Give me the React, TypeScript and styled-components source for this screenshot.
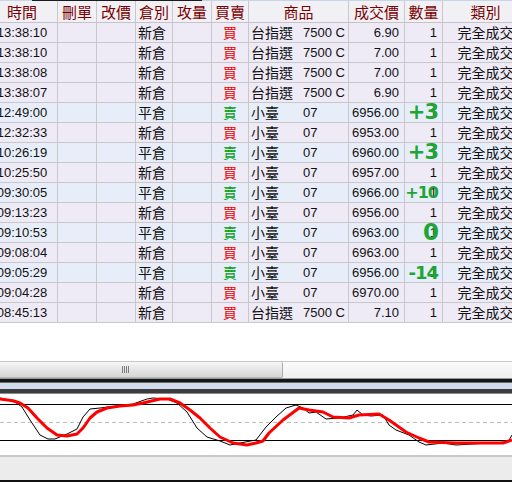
import React from 'react'
import styled, { createGlobalStyle } from 'styled-components'

const GlobalStyle = createGlobalStyle`
  html, body {
    margin: 0;
    padding: 0;
    background: #ffffff;
    overflow: hidden;
  }
  * {
    box-sizing: border-box;
  }
`

const COLS = '71px 39px 39px 37px 39px 37px 100px 56px 38px 86px'
const HEADERS = ['時間', '刪單', '改價', '倉別', '攻量', '買賣', '商品', '成交價', '數量', '類別']

type Trade = {
  time: string
  kind: string
  side: '買' | '賣'
  name: string
  code: string
  price: string
  qty: string
  pnl?: { text: string; size: number }
}

const trades: Trade[] = [
  { time: '13:38:10', kind: '新倉', side: '買', name: '台指選', code: '7500 C', price: '6.90', qty: '1' },
  { time: '13:38:10', kind: '新倉', side: '買', name: '台指選', code: '7500 C', price: '7.00', qty: '1' },
  { time: '13:38:08', kind: '新倉', side: '買', name: '台指選', code: '7500 C', price: '7.00', qty: '1' },
  { time: '13:38:07', kind: '新倉', side: '買', name: '台指選', code: '7500 C', price: '6.90', qty: '1' },
  { time: '12:49:00', kind: '平倉', side: '賣', name: '小臺', code: '07', price: '6956.00', qty: '1', pnl: { text: '+3', size: 21 } },
  { time: '12:32:33', kind: '新倉', side: '買', name: '小臺', code: '07', price: '6953.00', qty: '1' },
  { time: '10:26:19', kind: '平倉', side: '賣', name: '小臺', code: '07', price: '6960.00', qty: '1', pnl: { text: '+3', size: 21 } },
  { time: '10:25:50', kind: '新倉', side: '買', name: '小臺', code: '07', price: '6957.00', qty: '1' },
  { time: '09:30:05', kind: '平倉', side: '賣', name: '小臺', code: '07', price: '6966.00', qty: '1', pnl: { text: '+10', size: 16 } },
  { time: '09:13:23', kind: '新倉', side: '買', name: '小臺', code: '07', price: '6956.00', qty: '1' },
  { time: '09:10:53', kind: '平倉', side: '賣', name: '小臺', code: '07', price: '6963.00', qty: '1', pnl: { text: '0', size: 23 } },
  { time: '09:08:04', kind: '新倉', side: '買', name: '小臺', code: '07', price: '6963.00', qty: '1' },
  { time: '09:05:29', kind: '平倉', side: '賣', name: '小臺', code: '07', price: '6956.00', qty: '1', pnl: { text: '-14', size: 18 } },
  { time: '09:04:28', kind: '新倉', side: '買', name: '小臺', code: '07', price: '6970.00', qty: '1' },
  { time: '08:45:13', kind: '新倉', side: '買', name: '台指選', code: '7500 C', price: '7.10', qty: '1' },
]

// chart traces, y relative to chart top
const kLine = [
  [0, 4], [15, 8], [22, 13], [30, 26], [40, 41], [48, 45], [55, 45], [67, 40], [77, 35], [83, 23],
  [90, 15], [100, 14], [117, 12], [133, 10], [147, 5], [153, 4], [167, 5], [177, 9], [187, 18],
  [197, 34], [207, 43], [220, 47], [230, 51], [240, 49], [256, 46], [266, 33], [276, 23], [286, 14],
  [296, 11], [303, 14], [309, 19], [316, 18], [326, 25], [339, 24], [353, 21], [357, 16], [363, 21],
  [371, 22], [383, 21], [389, 31], [396, 36], [409, 41], [419, 48], [426, 51], [443, 49], [456, 51],
  [489, 49], [508, 48], [512, 41],
]

const dLine = [
  [0, 5], [13, 6.7], [20, 9], [28, 14], [37, 24], [47, 34], [57, 41], [67, 42], [77, 40], [83, 34],
  [90, 24], [97, 18], [107, 14], [120, 12], [133, 11], [143, 9], [160, 5], [170, 5], [180, 9],
  [190, 16], [200, 24], [210, 34], [220, 43], [233, 49], [247, 51], [256, 49], [263, 47], [269, 39],
  [283, 26], [299, 14], [309, 16], [323, 18], [333, 23], [349, 24], [359, 21], [379, 20], [389, 26],
  [406, 38], [419, 44], [429, 48], [456, 49], [473, 49], [503, 49], [512, 46],
]

const toPoints = (pts: number[][]) => pts.map(([x, y]) => `${x},${y}`).join(' ')

const App: React.FC = () => {
  return (
    <Page>
      <GlobalStyle />
      <TopStrip>
        <StripLight style={{ width: 32 }} />
        <StripDark />
        <StripLight style={{ flex: 1 }} />
      </TopStrip>
      <TableViewport>
        <Table>
          <HeaderRow>
            {HEADERS.map((h) => (
              <HeaderCell key={h}>{h}</HeaderCell>
            ))}
          </HeaderRow>
          {trades.map((t, i) => (
            <Row key={i} $sell={t.side === '賣'}>
              <Cell $align="center">{t.time}</Cell>
              <Cell />
              <Cell />
              <Cell $align="left" $cjk>{t.kind}</Cell>
              <Cell />
              <Cell $align="center" $cjk>
                <Side $sell={t.side === '賣'}>{t.side}</Side>
              </Cell>
              <Cell $align="left">
                <ProductName>{t.name}</ProductName>
                <span>{t.code}</span>
              </Cell>
              <Cell $align="right">{t.price}</Cell>
              <Cell $align="right">
                {t.qty}
                {t.pnl && <PnlBadge $size={t.pnl.size}>{t.pnl.text}</PnlBadge>}
              </Cell>
              <Cell $align="center" $cjk>完全成交</Cell>
            </Row>
          ))}
        </Table>
      </TableViewport>
      <ScrollTrack>
        <ScrollThumb>
          <Grip>
            <i /><i /><i /><i />
          </Grip>
        </ScrollThumb>
      </ScrollTrack>
      <Splitter>
        <SplitLine $h={1} $c="#9a9a9a" />
        <SplitLine $h={3} $c="#161616" />
        <SplitLine $h={1} $c="#6a6a6a" />
        <SplitLine $h={6} $c="#d2dcee" />
        <SplitLine $h={4} $c="#3c3c3c" />
        <SplitLine $h={1} $c="#8c8c8c" />
      </Splitter>
      <ChartPane>
        <svg width="512" height="61" viewBox="0 0 512 61">
          <line x1="0" y1="10.5" x2="512" y2="10.5" stroke="#000" strokeWidth="1.2" />
          <line x1="0" y1="28.5" x2="512" y2="28.5" stroke="#bdbdbd" strokeWidth="1" strokeDasharray="4 3" />
          <line x1="0" y1="46.5" x2="512" y2="46.5" stroke="#000" strokeWidth="1.2" />
          <polyline points={toPoints(kLine)} fill="none" stroke="#000" strokeWidth="1" strokeLinejoin="round" />
          <polyline points={toPoints(dLine)} fill="none" stroke="#ff0000" strokeWidth="3" strokeLinejoin="round" />
        </svg>
      </ChartPane>
      <Footer />
      <BottomEdge />
    </Page>
  )
}

const Page = styled.div`
  width: 512px;
  height: 482px;
  display: flex;
  flex-direction: column;
  background: #ffffff;
  overflow: hidden;
`

const TopStrip = styled.div`
  display: flex;
  height: 1px;
  flex-shrink: 0;
`

const StripLight = styled.div`
  background: #c9d4e6;
`

const StripDark = styled.div`
  width: 170px;
  background: #1c1c1c;
`

const TableViewport = styled.div`
  height: 360px;
  flex-shrink: 0;
  overflow: hidden;
  background: #ffffff;
`

const Table = styled.div`
  margin-left: -13px;
  width: 542px;
  display: flex;
  flex-direction: column;
`

const HeaderRow = styled.div`
  display: grid;
  grid-template-columns: ${COLS};
  height: 22px;
  background: #f1f1f5;
  border-bottom: 1px solid #c4c4c8;
`

const HeaderCell = styled.div`
  display: flex;
  align-items: center;
  justify-content: center;
  border-right: 1px solid #c8c8cc;
  color: #7a0000;
  font-family: 'Noto Sans CJK TC', 'Liberation Sans', sans-serif;
  font-size: 15px;
  line-height: 20px;
  white-space: nowrap;
  overflow: hidden;
`

const Row = styled.div<{ $sell: boolean }>`
  display: grid;
  grid-template-columns: ${COLS};
  height: 20px;
  background: ${(p) => (p.$sell ? '#e7eefa' : '#eeeaf6')};
  border-bottom: 1px solid #c8c8cc;
`

const Cell = styled.div<{ $align?: 'left' | 'center' | 'right'; $cjk?: boolean }>`
  position: relative;
  display: flex;
  align-items: center;
  justify-content: ${(p) =>
    p.$align === 'right' ? 'flex-end' : p.$align === 'center' ? 'center' : 'flex-start'};
  padding: ${(p) => (p.$align === 'right' ? '0 5px 0 0' : p.$align === 'left' ? '0 0 0 2px' : '0')};
  border-right: 1px solid #c8c8cc;
  color: #111111;
  font-family: ${(p) =>
    p.$cjk
      ? "'Noto Sans CJK TC', 'Liberation Sans', sans-serif"
      : "'Liberation Sans', 'Noto Sans CJK TC', sans-serif"};
  font-size: ${(p) => (p.$cjk ? '14px' : '13px')};
  line-height: 19px;
  white-space: nowrap;
  overflow: visible;
`

const ProductName = styled.span`
  display: inline-block;
  width: 52px;
  font-family: 'Noto Sans CJK TC', sans-serif;
  font-size: 14px;
`

const Side = styled.span<{ $sell: boolean }>`
  color: ${(p) => (p.$sell ? '#00a010' : '#f00000')};
`

const PnlBadge = styled.span<{ $size: number }>`
  position: absolute;
  right: 4px;
  top: 50%;
  transform: translateY(-52%);
  color: #1fa534;
  font-family: 'DejaVu Sans', 'Liberation Sans', sans-serif;
  font-weight: bold;
  font-size: ${(p) => p.$size}px;
  letter-spacing: -1px;
  line-height: 1;
  z-index: 1;
`

const ScrollTrack = styled.div`
  height: 17px;
  flex-shrink: 0;
  display: flex;
  border-top: 1px solid #c9c9c9;
  background: linear-gradient(#fbfbfb, #eeeeee);
`

const ScrollThumb = styled.div`
  width: 283px;
  height: 100%;
  display: flex;
  align-items: center;
  padding-left: 122px;
  border-right: 1px solid #a9a9a9;
  border-bottom: 1px solid #b5b5b5;
  border-radius: 0 2px 2px 0;
  background: linear-gradient(#f7f7f7, #e2e2e2 60%, #d6d6d6);
`

const Grip = styled.div`
  display: flex;
  gap: 1px;
  i {
    width: 1px;
    height: 7px;
    background: #7c7c7c;
  }
`

const Splitter = styled.div`
  display: flex;
  flex-direction: column;
  flex-shrink: 0;
`

const SplitLine = styled.div<{ $h: number; $c: string }>`
  height: ${(p) => p.$h}px;
  background: ${(p) => p.$c};
`

const ChartPane = styled.div`
  height: 61px;
  flex-shrink: 0;
  background: #ffffff;
  svg {
    display: block;
  }
`

const Footer = styled.div`
  flex: 1;
  background: #ececec;
  border-top: 2px solid #c9c9c9;
`

const BottomEdge = styled.div`
  height: 2px;
  flex-shrink: 0;
  background: #111111;
`

export default App
